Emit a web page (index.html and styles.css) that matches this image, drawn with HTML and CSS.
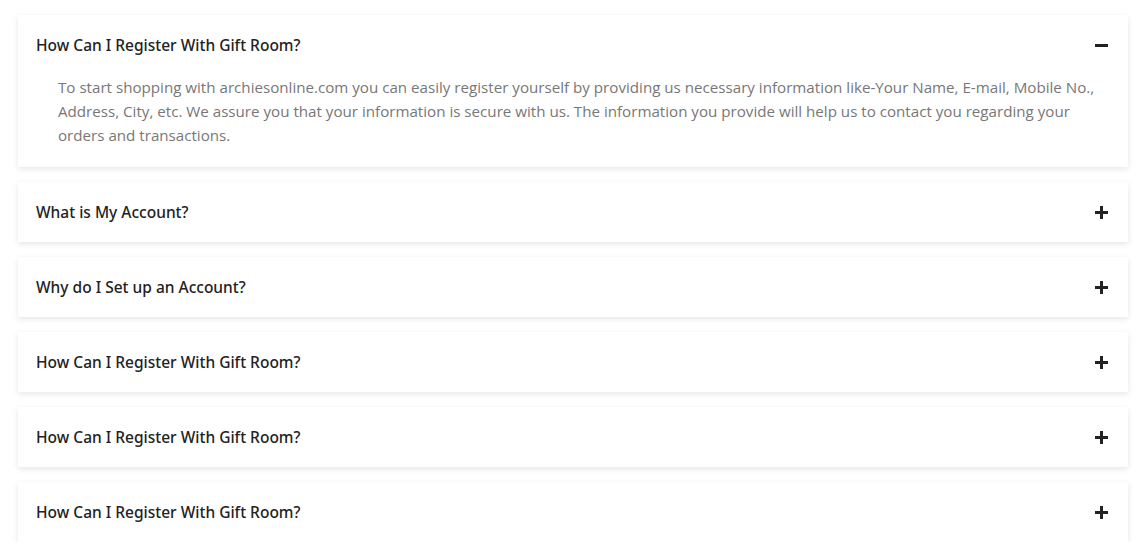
FILE: index.html
```html
<!DOCTYPE html>
<html>
<head>
<meta charset="utf-8">
<link rel="stylesheet" href="styles.css">
</head>
<body>
<div class="faq">
  <div class="item open">
    <div class="head"><span class="title">How Can I Register With Gift Room?</span><span class="icon minus"></span></div>
    <div class="body">To start shopping with archiesonline.com you can easily register yourself by providing us necessary information like-Your Name, E-mail, Mobile No., Address, City, etc. We assure you that your information is secure with us. The information you provide will help us to contact you regarding your orders and transactions.</div>
  </div>
  <div class="item">
    <div class="head"><span class="title">What is My Account?</span><span class="icon plus"></span></div>
  </div>
  <div class="item">
    <div class="head"><span class="title">Why do I Set up an Account?</span><span class="icon plus"></span></div>
  </div>
  <div class="item">
    <div class="head"><span class="title">How Can I Register With Gift Room?</span><span class="icon plus"></span></div>
  </div>
  <div class="item">
    <div class="head"><span class="title">How Can I Register With Gift Room?</span><span class="icon plus"></span></div>
  </div>
  <div class="item">
    <div class="head"><span class="title">How Can I Register With Gift Room?</span><span class="icon plus"></span></div>
  </div>
</div>
</body>
</html>
```
FILE: styles.css
```css
html, body { margin: 0; padding: 0; background: #fff; }
body { font-family: "Open Sans", "Noto Sans", sans-serif; }
.faq {
  display: flex;
  flex-direction: column;
  gap: 15px;
  padding: 15px 14px 0 18px;
}
.item {
  background: #fff;
  box-shadow: 0 2px 6px rgba(0,0,0,0.10);
}
.head {
  height: 60px;
  display: flex;
  align-items: center;
  justify-content: space-between;
  padding: 0 20px 0 18px;
}
.title {
  font-family: "Noto Sans", "Open Sans", sans-serif;
  font-size: 15.5px;
  font-weight: 500;
  color: #222;
}
.body {
  padding: 0 24px 20px 40px;
  font-size: 15.15px;
  line-height: 24px;
  color: #777;
}
.icon { position: relative; width: 13px; height: 13px; display: block; }
.icon::before, .icon::after {
  content: "";
  position: absolute;
  background: #222;
}
.icon::before { left: 0; right: 0; top: 5px; height: 3px; }
.plus::after { top: 0; bottom: 0; left: 5px; width: 3px; }
.minus::after { display: none; }
```
